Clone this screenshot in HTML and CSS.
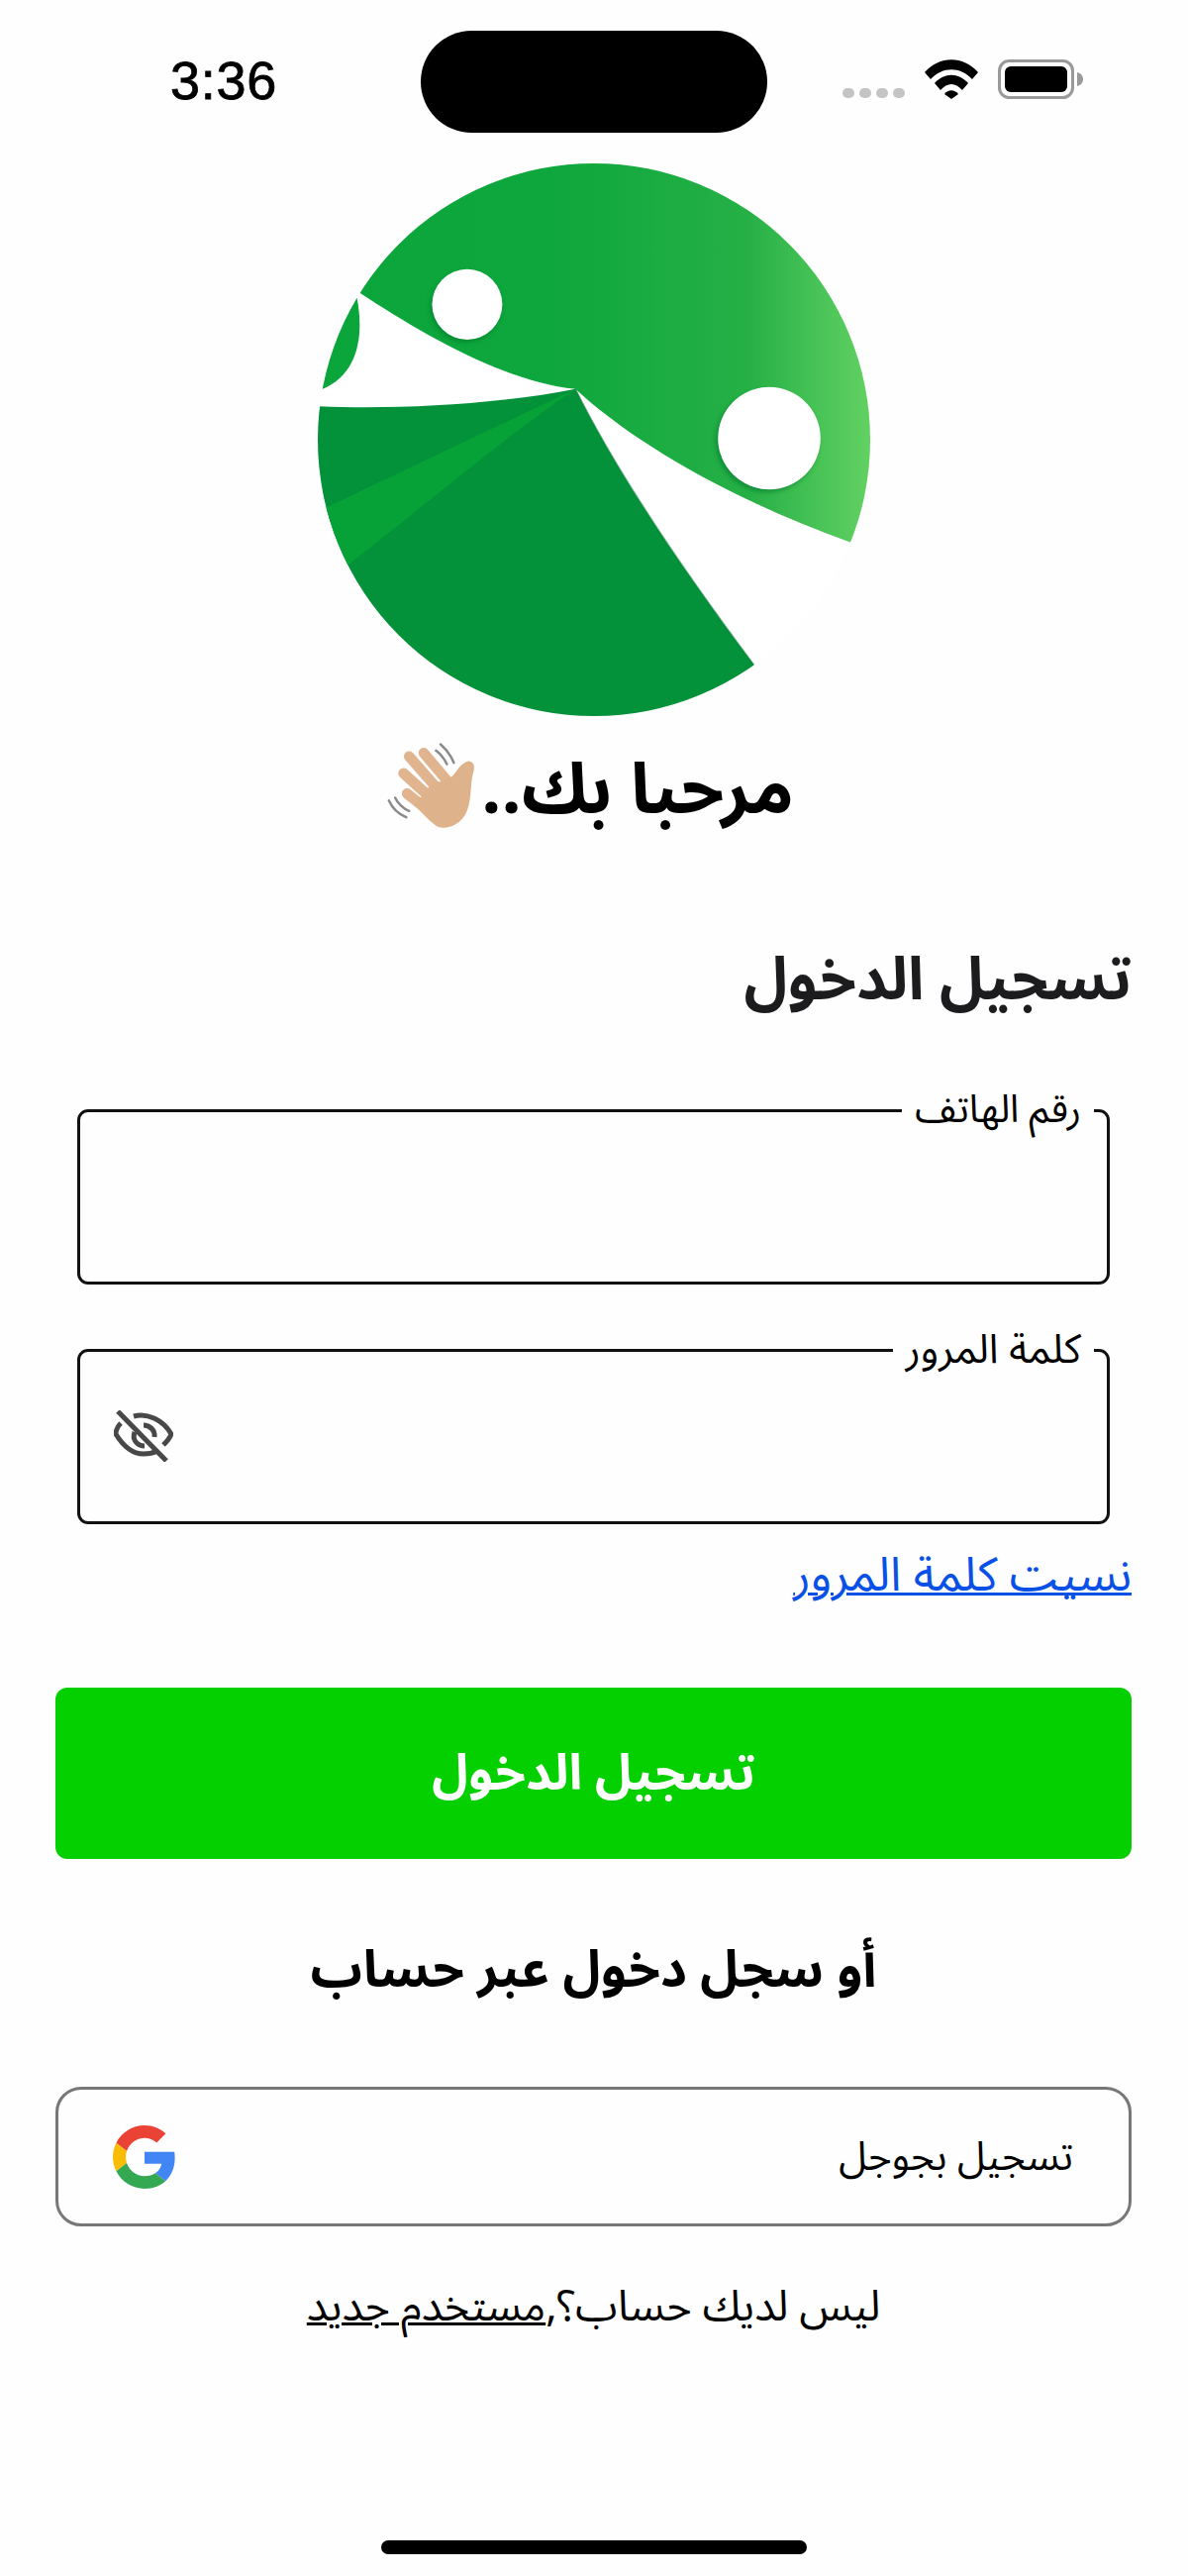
FILE: index.html
```html
<!DOCTYPE html>
<html lang="ar" dir="rtl">
<head>
<meta charset="utf-8">
<title>تسجيل الدخول</title>
<link rel="stylesheet" href="styles.css">
</head>
<body>
<div class="page">
  <header class="status" dir="ltr">
    <div class="time">3:36</div>
    <div class="island"></div>
    <div class="status-icons">
      <div class="dots"><i></i><i></i><i></i><i></i></div>
      <svg class="wifi" viewBox="0 0 54 40"><path d="M0 13 C15 -4 39 -4 54 13 L48 20 C36 7 18 7 6 20 Z"/><path d="M10 24 C20 13 34 13 44 24 L38 31 C31 23 23 23 16 31 Z"/><path d="M20 35 C24 30 30 30 34 35 L27 40 Z"/></svg>
      <svg class="battery" viewBox="0 0 86 40"><rect x="1.5" y="1.5" width="74" height="37" rx="10" fill="none" stroke="#999" stroke-width="3"/><rect x="7" y="7" width="63" height="26" rx="6" fill="#000"/><path d="M80 13 C84 14 86 17 86 20 C86 23 84 26 80 27 Z" fill="#999"/></svg>
    </div>
  </header>

  <svg class="logo" viewBox="100 65 1368 1458" preserveAspectRatio="none">
    <defs>
      <clipPath id="disc"><ellipse cx="784" cy="794" rx="684" ry="729"/></clipPath>
      <linearGradient id="lg" gradientUnits="userSpaceOnUse" x1="100" x2="1468" y1="0" y2="0">
        <stop offset="0" stop-color="#0aa53b"/>
        <stop offset=".42" stop-color="#0ea73d"/>
        <stop offset=".62" stop-color="#1bac42"/>
        <stop offset=".78" stop-color="#26b046"/>
        <stop offset=".88" stop-color="#41bf53"/>
        <stop offset="1" stop-color="#62d162"/>
      </linearGradient>
      <filter id="sh" x="-20%" y="-20%" width="140%" height="140%"><feGaussianBlur stdDeviation="6"/></filter>
    </defs>
    <g clip-path="url(#disc)">
      <ellipse cx="784" cy="794" rx="684" ry="729" fill="#fff"/>
      <path fill="url(#lg)" d="M205 407 C360 515 560 640 738 660 C880 800 1120 950 1420 1065 L1600 1130 L1600 0 L0 0 Z"/>
      <path fill="#0aa53b" d="M197 420 C215 520 200 620 112 660 L0 700 L0 300 Z"/>
      <path fill="#03913a" d="M104 706 C300 715 550 700 738 660 C850 900 1020 1160 1180 1388 L1300 1600 L0 1600 L0 706 Z"/>
      <path fill="#06a137" d="M738 660 L122 972 L60 1000 L120 1180 L180 1120 C350 980 560 790 738 660 Z"/>
      <path fill="none" stroke="#027a32" stroke-width="4" opacity=".55" d="M738 660 C850 900 1020 1160 1180 1388"/>
      <ellipse cx="466" cy="445" rx="87" ry="93" fill="#02702c" opacity=".5" filter="url(#sh)"/>
      <ellipse cx="470" cy="437" rx="87" ry="93" fill="#fff"/>
      <ellipse cx="1212" cy="798" rx="127" ry="135" fill="#02702c" opacity=".5" filter="url(#sh)"/>
      <ellipse cx="1218" cy="790" rx="127" ry="135" fill="#fff"/>
    </g>
  </svg>

  <h1 class="welcome"><span>مرحبا بك..</span><svg class="hand" viewBox="145 90 255 255">
    <g fill="none" stroke="#e0b48e" stroke-width="30" stroke-linecap="round">
      <path d="M208 132 L290 225"/><path d="M250 122 L320 205"/><path d="M192 180 L280 260"/><path d="M202 238 L280 300"/>
    </g>
    <path fill="#deb38c" d="M268 215 L330 190 C345 175 355 150 378 145 C398 148 396 165 390 185 C382 220 388 265 368 300 C350 330 310 345 285 330 C265 315 240 290 225 270 Z"/>
    <g fill="none" stroke="#8a8a8a" stroke-width="7" stroke-linecap="round">
      <path d="M298 97 C315 112 328 130 336 150"/><path d="M285 115 C298 125 310 140 316 154"/>
      <path d="M150 258 C160 280 180 298 200 306"/><path d="M168 250 C175 265 192 282 208 288"/>
    </g>
  </svg></h1>

  <h2 class="heading">تسجيل الدخول</h2>

  <div class="field">
    <label class="field-label">رقم الهاتف</label>
  </div>
  <div class="field field-second">
    <label class="field-label">كلمة المرور</label>
    <svg class="eye" viewBox="0 0 60 52" fill="none" stroke="#484848" stroke-width="5">
      <path d="M7 13 C3 17 2 21 2 24 C10 37 20 44 30 44 C35 44 40 43 44 41"/>
      <path d="M20 6 C34 2 50 10 58 24 C57 27 54 31 50 35"/>
      <path d="M21 22 C18 30 24 36 31 36"/>
      <path d="M30 15 C36 15 42 20 41 27"/>
      <path d="M4 1 L53 51"/>
    </svg>
  </div>

  <a class="forgot" href="#">نسيت كلمة المرور</a>

  <button class="login" type="button">تسجيل الدخول</button>

  <p class="or">أو سجل دخول عبر حساب</p>

  <button class="google" type="button">
    <span>تسجيل بجوجل</span>
    <svg class="g-logo" viewBox="0 0 48 48">
      <path fill="#EA4335" d="M24 9.5c3.54 0 6.71 1.22 9.21 3.6l6.85-6.85C35.9 2.38 30.47 0 24 0 14.62 0 6.51 5.38 2.56 13.22l7.98 6.19C12.43 13.72 17.74 9.5 24 9.5z"/>
      <path fill="#4285F4" d="M46.98 24.55c0-1.57-.15-3.09-.38-4.55H24v9.02h12.94c-.58 2.96-2.26 5.48-4.78 7.18l7.73 6c4.51-4.18 7.09-10.36 7.09-17.65z"/>
      <path fill="#FBBC05" d="M10.53 28.59c-.48-1.45-.76-2.99-.76-4.59s.27-3.14.76-4.59l-7.98-6.19C.92 16.46 0 20.12 0 24c0 3.88.92 7.54 2.56 10.78l7.97-6.19z"/>
      <path fill="#34A853" d="M24 48c6.48 0 11.93-2.13 15.89-5.81l-7.73-6c-2.15 1.45-4.92 2.3-8.16 2.3-6.26 0-11.57-4.22-13.47-9.91l-7.98 6.19C6.51 42.62 14.62 48 24 48z"/>
    </svg>
  </button>

  <p class="signup">ليس لديك حساب؟,<a href="#">مستخدم جديد</a></p>

  <div class="home-bar"></div>
</div>
</body>
</html>
```
FILE: styles.css
```css
* { box-sizing: border-box; }
html, body { margin: 0; padding: 0; background: #fefefe; }
body { font-family: "Noto Sans Arabic", "DejaVu Sans", sans-serif; color: #000; }
.page { width: 1200px; height: 2601px; padding: 0 57px 0 56px; display: flex; flex-direction: column; overflow: hidden; }

.status { height: 165px; margin: 0 -57px 0 -56px; padding: 31px 106px 0 172px; display: grid; grid-template-columns: 1fr 350px 1fr; align-items: start; flex: none; }
.time { font-family: "Liberation Sans", sans-serif; font-size: 54px; line-height: 54px; margin-top: 23px; font-weight: 400; letter-spacing: .7px; -webkit-text-stroke: .8px #000; }
.island { width: 350px; height: 103px; background: #000; border-radius: 52px; transform: translateX(-33px); }
.status-icons { display: flex; align-items: flex-end; justify-content: flex-end; margin-top: 29px; height: 40px; }
.dots { display: flex; gap: 5px; margin-right: 20px; margin-bottom: 1px; }
.dots i { width: 12px; height: 10px; border-radius: 5px; background: #c4c4c4; display: block; }
.wifi { width: 54px; height: 40px; margin-right: 20px; fill: #000; }
.battery { width: 86px; height: 40px; }

.logo { width: 558px; height: 558px; align-self: center; flex: none; }

.welcome { margin: 25px 0 0; height: 100px; display: flex; align-items: center; justify-content: center; gap: 0; font-size: 71px; font-weight: 700; line-height: 100px; flex: none; }
.hand { width: 90px; height: 90px; flex: none; margin-top: -8px; margin-right: -1px; transform: translateX(-6px); }

.heading { margin: 102px 0 0; align-self: flex-start; font-size: 60px; line-height: 80px; font-weight: 700; color: #1c1c1e; flex: none; }

.field { position: relative; flex: none; height: 177px; margin: 90px 22px 0 22px; border: 3px solid #111; border-radius: 11px; }
.field-second { margin-top: 65px; }
.field-label { position: absolute; top: -23px; right: 13px; padding: 0 13px; background: #fefefe; font-size: 39px; line-height: 42px; }
.field-second .field-label { font-size: 41px; }
.eye { position: absolute; left: 34px; top: 59px; width: 60px; height: 52px; }

.forgot { margin-top: 20px; align-self: flex-start; font-size: 47.7px; line-height: 64px; color: #0850e6; text-decoration: underline; text-decoration-thickness: 3px; flex: none; }

.login { margin-top: 81px; height: 173px; flex: none; width: 100%; border: 0; border-radius: 12px; background: #04d000; color: #fff; font: 700 50px/60px "Noto Sans Arabic", "DejaVu Sans", sans-serif; }

.or { margin: 78px 0 0; text-align: center; font-size: 52px; line-height: 70px; font-weight: 700; flex: none; }

.google { margin-top: 82px; height: 141px; width: 100%; flex: none; display: flex; align-items: center; justify-content: space-between; padding: 0 56px 0 55px; background: transparent; border: 3px solid #777; border-radius: 26px; color: #000; font: 400 40.5px/50px "Noto Sans Arabic", "DejaVu Sans", sans-serif; }
.g-logo { width: 64px; height: 64px; }

.signup { margin: 52px 0 0; text-align: center; font-size: 43px; line-height: 60px; flex: none; }
.signup a { color: #000; text-decoration: underline; text-decoration-thickness: 3px; }

.home-bar { width: 430px; height: 14px; border-radius: 7px; background: #000; align-self: center; flex: none; margin-top: 205px; }
```
